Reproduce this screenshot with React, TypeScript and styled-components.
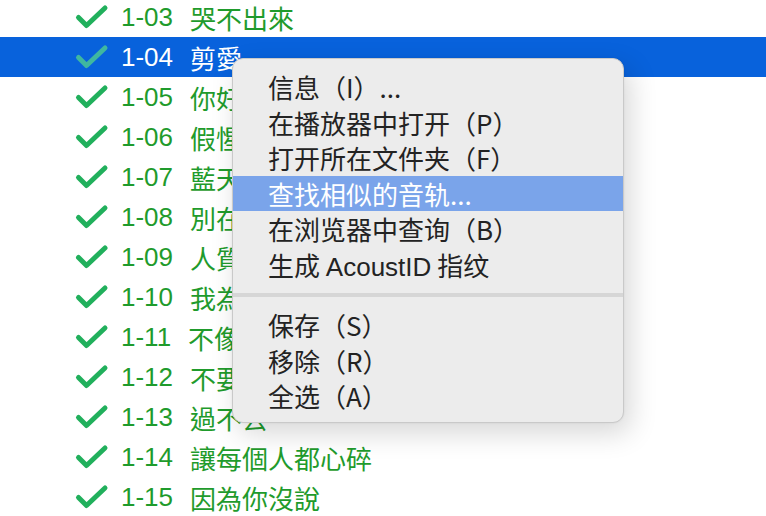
import React from "react";
import styled, { createGlobalStyle } from "styled-components";

const Global = createGlobalStyle`
  html, body { margin: 0; padding: 0; background: #ffffff; overflow: hidden; }
  body { width: 766px; height: 516px; }
`;

const Page = styled.div`
  position: relative;
  width: 766px;
  height: 516px;
  overflow: hidden;
  background: #ffffff;
`;

const List = styled.div`
  display: flex;
  flex-direction: column;
  margin-top: -3px;
`;

const Row = styled.div<{ $selected?: boolean }>`
  display: flex;
  align-items: center;
  height: 40px;
  padding-left: 73px;
  gap: 11px;
  background: ${(p) => (p.$selected ? "#0862dc" : "transparent")};
  color: ${(p) => (p.$selected ? "#ffffff" : "#1f9b2c")};
  font-family: "Liberation Sans", "Noto Sans CJK TC", sans-serif;
  font-size: 26px;
  white-space: nowrap;
`;

const Num = styled.span``;

const Title = styled.span`
  margin-left: 6px;
  font-family: "Noto Sans CJK TC", sans-serif;
`;

const Check = ({ selected }: { selected?: boolean }) => (
  <svg width="37" height="26" viewBox="0 0 37 26">
    <path
      d="M5.5 13.5 L13.5 21.5 L32 4"
      fill="none"
      stroke={selected ? "#3fb7a0" : "#21b05c"}
      strokeWidth="5"
      strokeLinecap="round"
      strokeLinejoin="round"
    />
  </svg>
);

const Menu = styled.div`
  position: absolute;
  left: 232px;
  top: 58px;
  width: 392px;
  box-sizing: border-box;
  padding: 10px 0 8px;
  background: #ececec;
  border: 1px solid #c9c9c9;
  border-radius: 11px;
  box-shadow: 6px 10px 28px rgba(0, 0, 0, 0.16), 0 0 2px rgba(0, 0, 0, 0.08);
  display: flex;
  flex-direction: column;
`;

const Item = styled.div<{ $active?: boolean }>`
  height: 35.5px;
  display: flex;
  align-items: center;
  padding-left: 35px;
  background: ${(p) => (p.$active ? "#7aa4ea" : "transparent")};
  color: ${(p) => (p.$active ? "#ffffff" : "#232323")};
  font-family: "Liberation Sans", "Noto Sans CJK SC", sans-serif;
  font-size: 26px;
  white-space: pre;
`;

const Label = styled.span``;

const Cjk = styled.span`
  font-family: "Noto Sans CJK SC", sans-serif;
`;

const Separator = styled.div`
  height: 4px;
  margin: 11px 0 10px;
  background: #d6d6d6;
`;

const tracks = [
  ["1-03", "哭不出來"],
  ["1-04", "剪愛"],
  ["1-05", "你好不好"],
  ["1-06", "假惺惺"],
  ["1-07", "藍天"],
  ["1-08", "別在傷口灑鹽"],
  ["1-09", "人質"],
  ["1-10", "我為你"],
  ["1-11", "不像"],
  ["1-12", "不要再說"],
  ["1-13", "過不去"],
  ["1-14", "讓每個人都心碎"],
  ["1-15", "因為你沒說"],
];

type MenuEntry = { label: string; latin?: string; tail?: string; active?: boolean } | "sep";

const menu: MenuEntry[] = [
  { label: "信息（I）..." },
  { label: "在播放器中打开（P）" },
  { label: "打开所在文件夹（F）" },
  { label: "查找相似的音轨...", active: true },
  { label: "在浏览器中查询（B）" },
  { label: "生成 ", latin: "AcoustID", tail: " 指纹" },
  "sep",
  { label: "保存（S）" },
  { label: "移除（R）" },
  { label: "全选（A）" },
];

export default function App() {
  return (
    <Page>
      <Global />
      <List>
        {tracks.map(([n, t]) => {
          const sel = n === "1-04";
          return (
            <Row key={n} $selected={sel}>
              <Check selected={sel} />
              <Num>{n}</Num>
              <Title>{t}</Title>
            </Row>
          );
        })}
      </List>
      <Menu>
        {menu.map((m, i) =>
          m === "sep" ? (
            <Separator key={i} />
          ) : (
            <Item key={i} $active={m.active}>
              <Label>
                <Cjk>{m.label}</Cjk>
                {m.latin && <span>{m.latin}</span>}
                {m.tail && <Cjk>{m.tail}</Cjk>}
              </Label>
            </Item>
          )
        )}
      </Menu>
    </Page>
  );
}
